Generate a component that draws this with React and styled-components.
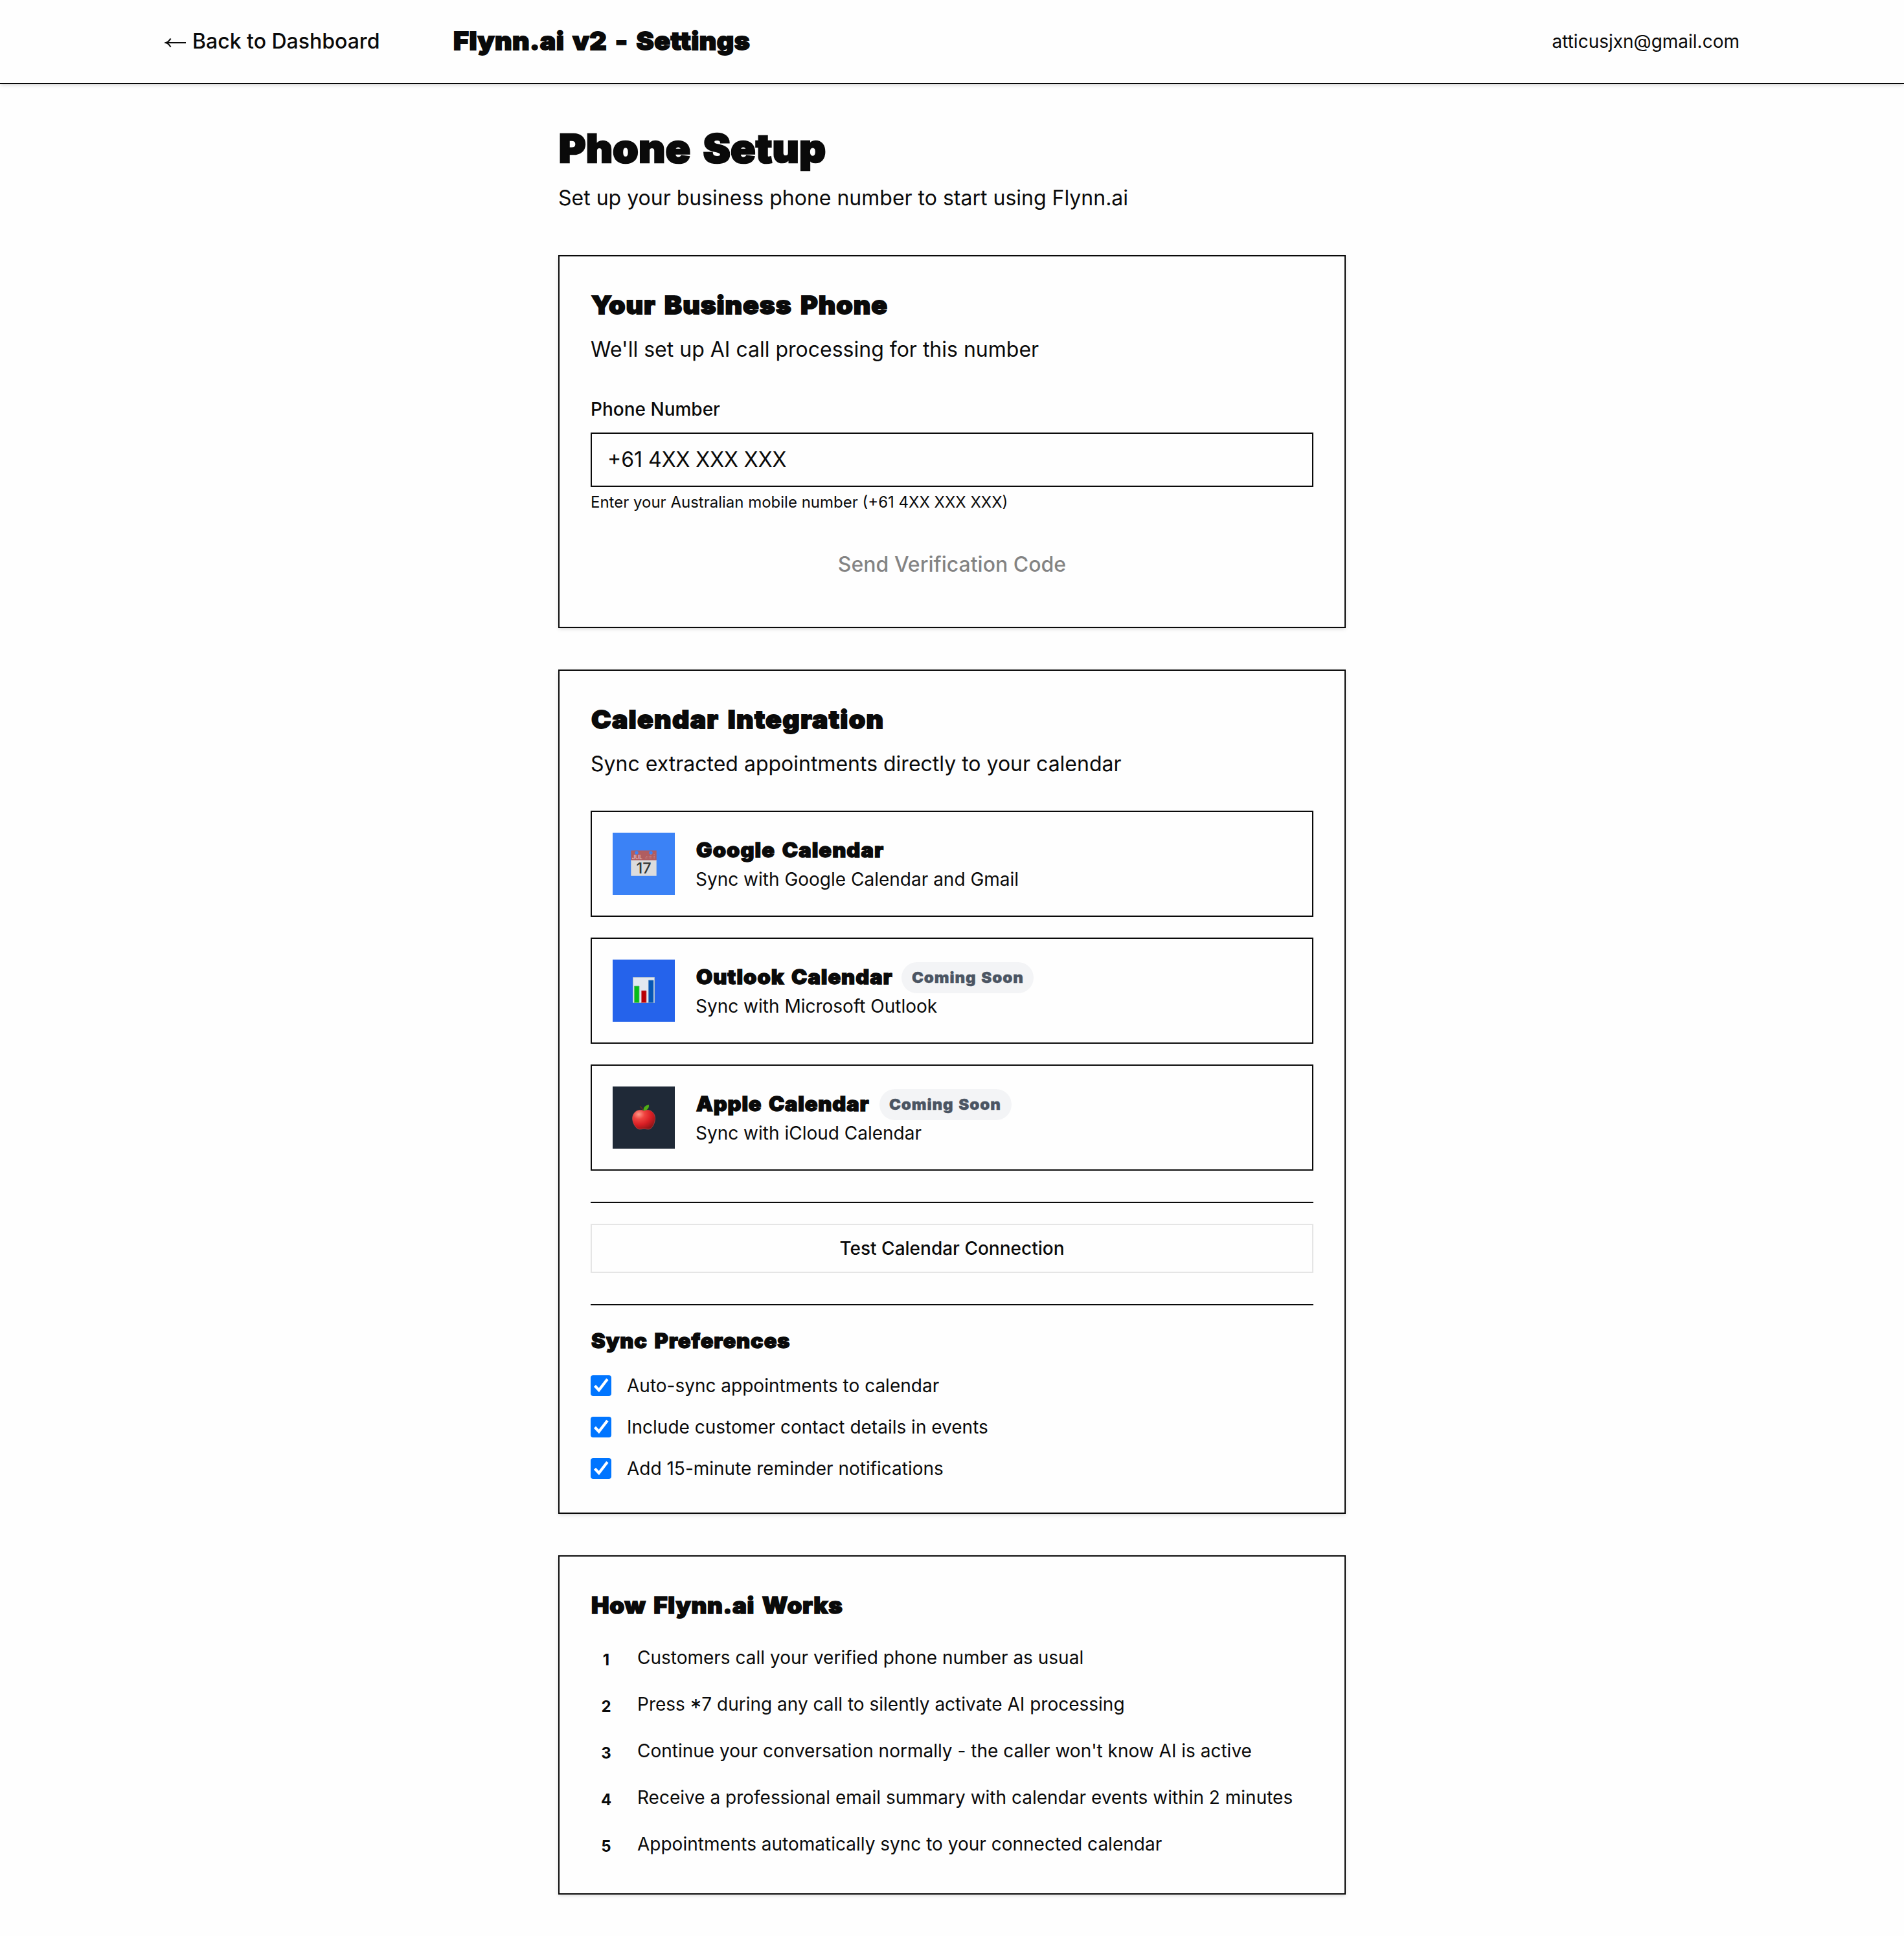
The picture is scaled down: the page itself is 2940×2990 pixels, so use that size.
import React from 'react';
import styled, { createGlobalStyle } from 'styled-components';

const GlobalStyle = createGlobalStyle`
  *, *::before, *::after { box-sizing: border-box; }
  body {
    margin: 0;
    background: #fefefe;
    color: #0a0a0a;
    font-family: Inter, "Liberation Sans", sans-serif;
    font-size: 32px;
    line-height: 48px;
  }
  h1, h2, h3, p, ol { margin: 0; padding: 0; }
`;

const shadow = '0 2px 6px rgba(0, 0, 0, 0.1), 0 2px 4px -2px rgba(0, 0, 0, 0.1)';

const Page = styled.div`
  min-height: 2990px;
`;

const Header = styled.header`
  height: 130px;
  border-bottom: 2px solid #0a0a0a;
  box-shadow: ${shadow};
`;

const HeaderInner = styled.div`
  width: 2560px;
  height: 128px;
  margin: 0 auto;
  padding: 0 64px;
  display: flex;
  align-items: center;
  justify-content: space-between;
`;

const HeaderLeft = styled.div`
  display: flex;
  align-items: center;
`;

const BackLink = styled.a`
  width: 445px;
  display: flex;
  align-items: center;
  gap: 9px;
  font-weight: 500;
`;

const Arrow = styled.svg`
  width: 34px;
  height: 20px;
  margin-top: 4px;
`;

const Heading = styled.h2`
  width: max-content;
  padding: 0 0 2px 1px;
  font-size: ${(p) => p.$size}px;
  line-height: ${(p) => p.$line - 2}px;
  font-weight: 900;
  letter-spacing: ${(p) => p.$track}px;
  word-spacing: ${(p) => p.$size * 0.1}px;
  -webkit-text-stroke: 0.045em #0a0a0a;
  white-space: nowrap;
  transform: scaleX(1.05);
  transform-origin: left center;
`;

const Email = styled.span`
  font-size: 28px;
  line-height: 40px;
`;

const Main = styled.main`
  width: 1216px;
  margin: 0 auto;
  padding-top: 64px;
`;

const Intro = styled.div`
  height: 200px;
`;

const Lead = styled.p`
  margin-top: 16px;
`;

const Card = styled.section`
  height: ${(p) => p.$height}px;
  margin-bottom: 64px;
  padding: 48px;
  border: 2px solid #0a0a0a;
  box-shadow: ${shadow};
`;

const Label = styled.label`
  display: block;
  margin-top: 48px;
  font-size: 28px;
  line-height: 40px;
  font-weight: 500;
`;

const PhoneInput = styled.input`
  display: block;
  width: 100%;
  height: 84px;
  margin-top: 16px;
  padding: 0 24px 2px;
  border: 2px solid #0a0a0a;
  border-radius: 0;
  background: transparent;
  font: inherit;
  color: #0a0a0a;
  &::placeholder { color: #0a0a0a; opacity: 1; }
`;

const Hint = styled.p`
  margin-top: 8px;
  font-size: 24px;
  line-height: 32px;
`;

const SendButton = styled.button`
  display: block;
  width: 100%;
  height: 80px;
  margin-top: 40px;
  border: 0;
  background: transparent;
  font: inherit;
  font-weight: 500;
  color: #0a0a0a;
  opacity: 0.5;
`;

const Providers = styled.div`
  display: flex;
  flex-direction: column;
  gap: 32px;
  margin-top: 48px;
`;

const Provider = styled.div`
  height: 164px;
  padding: 32px;
  border: 2px solid #0a0a0a;
  display: flex;
  align-items: center;
  gap: 32px;
`;

const Tile = styled.div`
  width: 96px;
  height: 96px;
  background: ${(p) => p.$color};
  display: flex;
  align-items: center;
  justify-content: center;
  svg { width: 40px; height: 40px; margin-bottom: 2px; overflow: visible; }
`;

const ProviderTitle = styled.div`
  display: flex;
  align-items: center;
  gap: 28px;
  height: 48px;
`;

const Badge = styled.span`
  width: 204px;
  height: 48px;
  border-radius: 24px;
  background: #f3f4f6;
  color: #4b5563;
  display: flex;
  align-items: center;
  justify-content: center;
  padding-bottom: 1px;
  font-size: 23px;
  line-height: 32px;
  font-weight: 900;
  letter-spacing: 0.83px;
  word-spacing: 2px;
  white-space: nowrap;
`;

const BadgeText = styled.span`
  transform: scaleX(1.05);
  -webkit-text-stroke: 0.4px #4b5563;
`;

const Small = styled.p`
  font-size: 28px;
  line-height: 40px;
`;

const Divided = styled.div`
  margin-top: 48px;
  padding-top: 32px;
  border-top: 2px solid #0a0a0a;
`;

const TestButton = styled.button`
  display: block;
  width: 100%;
  height: 76px;
  border: 2px solid #e5e5e5;
  background: transparent;
  font: inherit;
  font-size: 28px;
  font-weight: 500;
  color: #0a0a0a;
`;

const Options = styled.div`
  display: flex;
  flex-direction: column;
  gap: 24px;
  margin-top: 24px;
`;

const Option = styled.label`
  display: flex;
  align-items: center;
  gap: 24px;
  height: 40px;
  font-size: 28px;
`;

const CheckBox = styled.span`
  width: 32px;
  height: 32px;
  border-radius: 4px;
  background: #0075ff;
  svg { display: block; width: 32px; height: 32px; }
`;

const Steps = styled.ol`
  display: flex;
  flex-direction: column;
  gap: 24px;
  margin-top: 32px;
  list-style: none;
`;

const Step = styled.li`
  display: flex;
  align-items: flex-start;
  gap: 24px;
  height: 48px;
  font-size: 28px;
  line-height: 40px;
`;

const StepNumber = styled.span`
  width: 48px;
  height: 48px;
  display: flex;
  align-items: center;
  justify-content: center;
  font-size: 24px;
  font-weight: 700;
`;

const Star = styled.span`
  font-size: 35px;
  line-height: 0;
  vertical-align: -8px;
`;

const CalendarIcon = () => (
  <svg viewBox="0 0 40 40">
    <path fill="#dcdcdd" d="M.3 15h39.4v24.7H.3z" />
    <path fill="#b05d60" d="M.3.6h39.4v15H.3z" />
    <circle cx="9" cy="4" r="2.7" fill="#3b82f6" />
    <circle cx="31" cy="4" r="2.7" fill="#3b82f6" />
    <path stroke="#e2b6b8" strokeWidth="1" strokeDasharray="1 1" d="M22 12h16M24 9.500h14M30 7h8" opacity=".45" />
    <text x="1.800" y="14" fontFamily="Inter, sans-serif" fontSize="8.500" fill="#f0d4d5">JUL</text>
    <text x="20" y="35.700" textAnchor="middle" fontFamily="Inter, sans-serif" fontSize="23.500" fontWeight="500" fill="#333736">17</text>
  </svg>
);

const ChartIcon = () => (
  <svg viewBox="0 0 40 40">
    <path fill="#e2e8f0" stroke="#aebfd2" strokeWidth="1" d="M3.500.500h33v39h-33z" />
    <path fill="#06bd18" stroke="#63b873" strokeWidth=".8" d="M5.500 14h7.500v25.500H5.500z" />
    <path fill="#b90005" stroke="#c8666b" strokeWidth=".8" d="M16.500 21h7.500v18.500h-7.500z" />
    <path fill="#0556b4" stroke="#4f86c4" strokeWidth=".8" d="M27.500 5h7.500v34.500h-7.500z" />
  </svg>
);

const AppleIcon = () => (
  <svg viewBox="0 0 40 40">
    <defs>
      <radialGradient id="skin" cx="0.28" cy="0.22" r="0.85">
        <stop offset="0" stopColor="#ff9a8a" />
        <stop offset="0.3" stopColor="#f04440" />
        <stop offset="0.65" stopColor="#d81e24" />
        <stop offset="1" stopColor="#8e1518" />
      </radialGradient>
    </defs>
    <path fill="none" stroke="#5d3024" strokeWidth="1.500" strokeLinecap="round" d="M14.500 4c2 1.300 3.500 3.200 4.500 6" />
    <path fill="url(#skin)" stroke="#d9605a" strokeWidth=".5" d="M20 10.500c3-1.400 8-1.700 11.500.5 4.500 2.800 6.500 7.500 6 13-.600 6-4 12.500-7.500 14.500-3 1.300-6.500 0-9.500-.2-3 .2-6.500 1.500-9.500.2C7.300 36.500 3.300 30 2.700 24c-.5-5.500 1.500-10.200 6-13 3.300-2.200 8.300-1.900 11.300-.5z" />
    <path fill="#4fae14" d="M19.500 10.200C19.300 5.500 22 2 28 1.200c.6 4.800-2.500 9-8.500 9z" />
  </svg>
);

const Check = () => (
  <CheckBox>
    <svg viewBox="0 0 32 32">
      <path fill="none" stroke="#fff" strokeWidth="4.300" d="M6.500 16.300l6.300 6.700L25.900 6" />
    </svg>
  </CheckBox>
);

const providers = [
  { name: 'Google Calendar', text: 'Sync with Google Calendar and Gmail', color: '#3b82f6', icon: <CalendarIcon />, track: 1, soon: false },
  { name: 'Outlook Calendar', text: 'Sync with Microsoft Outlook', color: '#2563eb', icon: <ChartIcon />, track: 0.92, soon: true },
  { name: 'Apple Calendar', text: 'Sync with iCloud Calendar', color: '#1f2937', icon: <AppleIcon />, track: 0.78, soon: true },
];

const options = [
  'Auto-sync appointments to calendar',
  'Include customer contact details in events',
  'Add 15-minute reminder notifications',
];

const steps = [
  'Customers call your verified phone number as usual',
  <>Press <Star>*</Star>7 during any call to silently activate AI processing</>,
  "Continue your conversation normally - the caller won't know AI is active",
  'Receive a professional email summary with calendar events within 2 minutes',
  'Appointments automatically sync to your connected calendar',
];

export default function App() {
  return (
    <Page>
      <GlobalStyle />
      <Header>
        <HeaderInner>
          <HeaderLeft>
            <BackLink>
              <Arrow viewBox="0 0 34 20">
                <path fill="none" stroke="#0a0a0a" strokeWidth="2.200" d="M33 10H2M9.500 3.500C7.500 7 5.500 9 2 10c3.500 1 5.500 3 7.500 6.500" />
              </Arrow>
              Back to Dashboard
            </BackLink>
            <Heading as="h1" $size={39} $line={56} $track={0.42}>Flynn.ai v2 - Settings</Heading>
          </HeaderLeft>
          <Email>atticusjxn@gmail.com</Email>
        </HeaderInner>
      </Header>
      <Main>
        <Intro>
          <Heading as="h1" $size={60} $line={72} $track={0.5}>Phone Setup</Heading>
          <Lead>Set up your business phone number to start using Flynn.ai</Lead>
        </Intro>
        <Card $height={576}>
          <Heading $size={39} $line={56} $track={0.86}>Your Business Phone</Heading>
          <Lead>We'll set up AI call processing for this number</Lead>
          <Label>Phone Number</Label>
          <PhoneInput placeholder="+61 4XX XXX XXX" />
          <Hint>Enter your Australian mobile number (+61 4XX XXX XXX)</Hint>
          <SendButton>Send Verification Code</SendButton>
        </Card>
        <Card $height={1304}>
          <Heading $size={39} $line={56} $track={1.2}>Calendar Integration</Heading>
          <Lead>Sync extracted appointments directly to your calendar</Lead>
          <Providers>
            {providers.map((p) => (
              <Provider key={p.name}>
                <Tile $color={p.color}>{p.icon}</Tile>
                <div>
                  <ProviderTitle>
                    <Heading as="h3" $size={31} $line={48} $track={p.track}>{p.name}</Heading>
                    {p.soon && <Badge><BadgeText>Coming Soon</BadgeText></Badge>}
                  </ProviderTitle>
                  <Small>{p.text}</Small>
                </div>
              </Provider>
            ))}
          </Providers>
          <Divided>
            <TestButton>Test Calendar Connection</TestButton>
          </Divided>
          <Divided>
            <Heading as="h3" $size={31} $line={48} $track={0.88}>Sync Preferences</Heading>
            <Options>
              {options.map((o) => (
                <Option key={o}><Check />{o}</Option>
              ))}
            </Options>
          </Divided>
        </Card>
        <Card $height={524}>
          <Heading as="h3" $size={35} $line={56} $track={0.65}>How Flynn.ai Works</Heading>
          <Steps>
            {steps.map((s, i) => (
              <Step key={i}><StepNumber>{i + 1}</StepNumber><span>{s}</span></Step>
            ))}
          </Steps>
        </Card>
      </Main>
    </Page>
  );
}
